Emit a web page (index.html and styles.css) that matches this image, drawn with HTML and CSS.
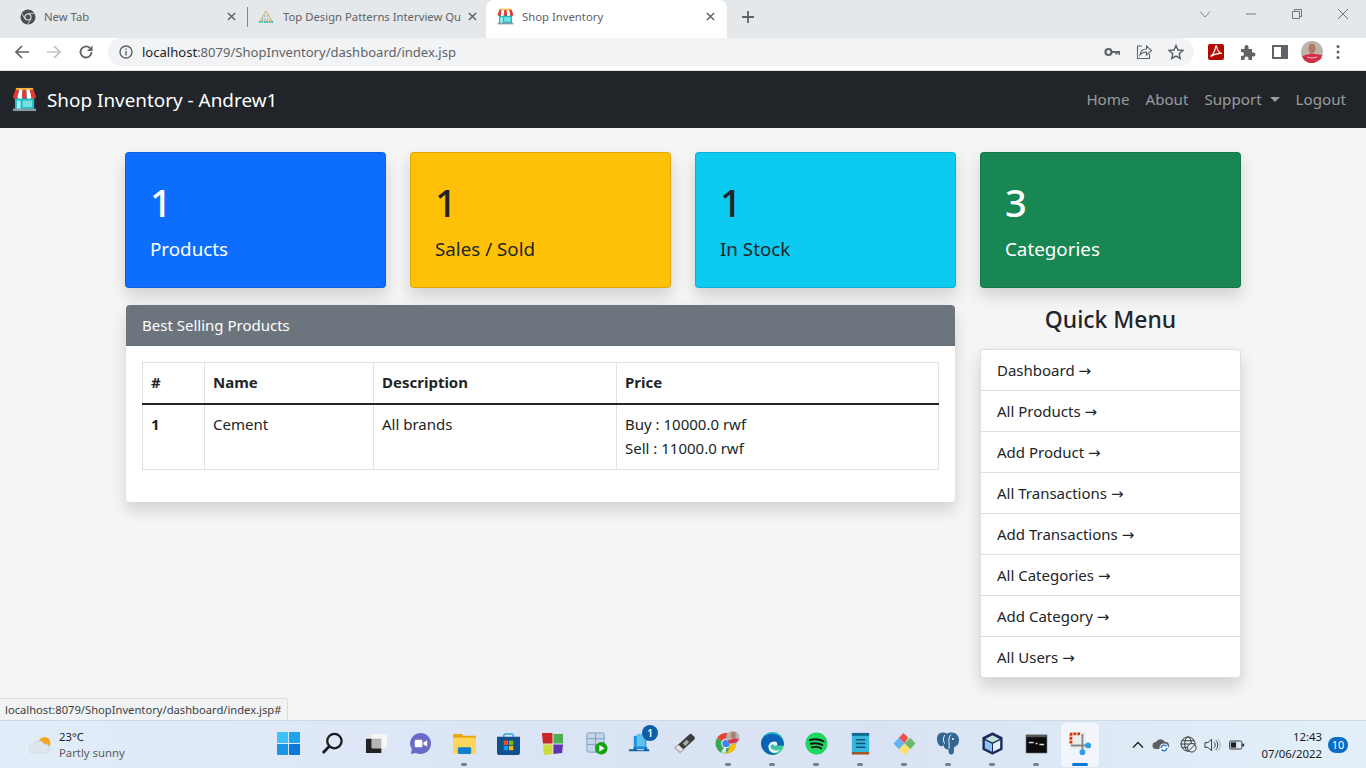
FILE: index.html
```html
<!DOCTYPE html>
<html lang="en">
<head>
<meta charset="utf-8">
<title>Shop Inventory</title>
<link rel="stylesheet" href="styles.css">
</head>
<body>
<svg class="defs" width="0" height="0" aria-hidden="true">
  <defs>
    <symbol id="store" viewBox="0 0 26 26">
      <rect x="3" y="9" width="20" height="14" fill="#17bcc6"/>
      <rect x="11" y="14" width="10" height="7" fill="#74e0e4"/>
      <rect x="5" y="14" width="4" height="9" fill="#a5ecee"/>
      <rect x="1" y="22.500" width="24" height="2.500" fill="#8e99a6"/>
      <path d="M4 2h3.600L5.800 10a2.400 2.400 0 0 1-4.800 0z" fill="#e53935"/>
      <path d="M7.600 2h3.600l-.6 8a2.400 2.400 0 0 1-4.800 0z" fill="#fff"/>
      <path d="M11.200 2h3.600l.6 8a2.400 2.400 0 0 1-4.800 0z" fill="#e53935"/>
      <path d="M14.800 2h3.600l1.800 8a2.400 2.400 0 0 1-4.800 0z" fill="#fff"/>
      <path d="M18.400 2H22l3 8a2.400 2.400 0 0 1-4.800 0z" fill="#e53935"/>
      <rect x="4" y="1" width="18" height="1.800" fill="#fbb933"/>
    </symbol>
    <symbol id="x" viewBox="0 0 10 10"><path d="M1 1l8 8M9 1l-8 8" fill="none" stroke="#5f6368" stroke-width="1.600"/></symbol>
  </defs>
</svg>

<header class="tabstrip">
  <div class="tab">
    <svg class="fav" viewBox="0 0 16 16"><circle cx="8" cy="8" r="7.500" fill="#4a4d51"/><circle cx="8" cy="8" r="3.600" fill="#e4e8eb"/><circle cx="8" cy="8" r="2.500" fill="#4a4d51"/><path d="M8 4.400h6.500M5 10l-3.200-5.600M11 10l-3.500 5.500" stroke="#e4e8eb" stroke-width=".8"/></svg>
    <span class="tab-title">New Tab</span>
    <svg class="tab-x"><use href="#x"/></svg>
  </div>
  <div class="tab tab-sep">
    <svg class="fav" viewBox="0 0 16 16"><path d="M8 2L2 12h12z" fill="none" stroke="#e3a857" stroke-width="1"/><path d="M1 13h14" stroke="#2db5bd" stroke-width="2" stroke-dasharray="1.500 1"/><path d="M4 10h8M6 7h4" stroke="#7fc4d6" stroke-width="1.500" stroke-dasharray="1.500 1"/></svg>
    <span class="tab-title">Top Design Patterns Interview Qu</span>
    <svg class="tab-x"><use href="#x"/></svg>
  </div>
  <div class="tab tab-active">
    <svg class="fav"><use href="#store"/></svg>
    <span class="tab-title">Shop Inventory</span>
    <svg class="tab-x"><use href="#x"/></svg>
  </div>
  <svg class="newtab" viewBox="0 0 12 12"><path d="M6 0v12M0 6h12" stroke="#5f6368" stroke-width="1.800"/></svg>
  <div class="winctl">
    <svg viewBox="0 0 12 12"><path d="M1 3.500l5 5.500 5-5.500" fill="none" stroke="#80868b"/></svg>
    <svg viewBox="0 0 12 12"><path d="M1 6h10" stroke="#777"/></svg>
    <svg viewBox="0 0 12 12"><path d="M1.500 3.500h7v7h-7zM3.500 3.500v-2h7v7h-2" fill="none" stroke="#777"/></svg>
    <svg viewBox="0 0 12 12"><path d="M1 1l10 10M11 1L1 11" stroke="#777"/></svg>
  </div>
</header>

<div class="toolbar">
  <svg class="tool" viewBox="0 0 16 16"><path d="M15 8H2M8 2L2 8l6 6" fill="none" stroke="#5f6368" stroke-width="1.700"/></svg>
  <svg class="tool" viewBox="0 0 16 16"><path d="M1 8h13M8 2l6 6-6 6" fill="none" stroke="#bdc1c6" stroke-width="1.700"/></svg>
  <svg class="tool" viewBox="0 0 16 16"><path d="M13.500 8A5.500 5.500 0 1 1 11.800 4" fill="none" stroke="#5f6368" stroke-width="1.800"/><path d="M14.500 1.500v5.500H9z" fill="#5f6368"/></svg>
  <div class="omnibox">
    <svg class="info" viewBox="0 0 14 14"><circle cx="7" cy="7" r="6" fill="none" stroke="#5f6368" stroke-width="1.400"/><path d="M7 6v4.500M7 3.500v1.300" stroke="#5f6368" stroke-width="1.400"/></svg>
    <span class="url"><span class="url-host">localhost</span>:8079/ShopInventory/dashboard/index.jsp</span>
    <span class="omni-icons">
      <svg viewBox="0 0 16 16"><circle cx="4.500" cy="8" r="3" fill="none" stroke="#5f6368" stroke-width="2.200"/><path d="M7 8h8.500v3M12.500 8v2.500" fill="none" stroke="#5f6368" stroke-width="2"/></svg>
      <svg viewBox="0 0 16 16"><path d="M6 2H1.500v12.500h12V10" fill="none" stroke="#5f6368" stroke-width="1.100"/><path d="M4 11c.5-4 3.500-6 6.500-6V2l5 4.500-5 4.500V8C8 8 5.500 9 4 11z" fill="none" stroke="#5f6368" stroke-width="1.100"/></svg>
      <svg viewBox="0 0 16 16"><path d="M8 1.500l2 4.500 4.800.5-3.600 3.200 1 4.800L8 12.100l-4.200 2.400 1-4.800L1.200 6.500 6 6z" fill="none" stroke="#5f6368" stroke-width="1.500"/></svg>
    </span>
  </div>
  <div class="ext-icons">
    <svg viewBox="0 0 16 16"><rect width="16" height="16" rx="2" fill="#b30b00"/><path d="M2.500 12.500C5 11 7.500 6 7.500 3c0-1.500 1.300-1.500 1.300 0 0 3 2.500 6 5 6.500-3-.5-7 .5-11.300 3z" fill="none" stroke="#fff" stroke-width="1.200"/></svg>
    <svg viewBox="0 0 16 16"><path d="M1 5h3.500V3a2 2 0 0 1 4 0v2H12v3.500h1.500a2 2 0 0 1 0 4H12V16H8.500v-1.500a2 2 0 0 0-4 0V16H1v-4h1a2 2 0 0 0 0-4H1z" fill="#5f6368"/></svg>
    <svg viewBox="0 0 16 16"><rect x="1" y="2" width="14" height="12" fill="none" stroke="#5f6368" stroke-width="2"/><rect x="9" y="2" width="6" height="12" fill="#5f6368"/></svg>
    <svg class="avatar" viewBox="0 0 22 22"><circle cx="11" cy="11" r="11" fill="#bdb4ae"/><ellipse cx="11" cy="7.500" rx="3.600" ry="5" fill="#b27a62"/><path d="M1 15l9-2.500 11 1.500-1 4-7 4h-5l-5-3z" fill="#d42d45"/><path d="M6 16l5 1 5-1" stroke="#f3c6cd" fill="none"/></svg>
    <svg class="dots" viewBox="0 0 4 16"><circle cx="2" cy="2.500" r="1.500" fill="#5f6368"/><circle cx="2" cy="8" r="1.500" fill="#5f6368"/><circle cx="2" cy="13.500" r="1.500" fill="#5f6368"/></svg>
  </div>
</div>

<nav class="navbar">
  <a class="brand" href="#"><svg class="brand-icon"><use href="#store"/></svg>Shop Inventory - Andrew1</a>
  <div class="nav-links">
    <a href="#">Home</a>
    <a href="#">About</a>
    <a href="#" class="caret">Support</a>
    <a href="#">Logout</a>
  </div>
</nav>

<main class="page">
  <div class="container">
    <section class="stats">
      <div class="stat stat-blue"><div class="stat-num">1</div><div class="stat-label">Products</div></div>
      <div class="stat stat-yellow"><div class="stat-num">1</div><div class="stat-label">Sales / Sold</div></div>
      <div class="stat stat-cyan"><div class="stat-num">1</div><div class="stat-label">In Stock</div></div>
      <div class="stat stat-green"><div class="stat-num">3</div><div class="stat-label">Categories</div></div>
    </section>
    <section class="lower">
      <div class="best">
        <div class="best-head">Best Selling Products</div>
        <div class="best-body">
          <table>
            <thead>
              <tr><th class="c1">#</th><th class="c2">Name</th><th class="c3">Description</th><th>Price</th></tr>
            </thead>
            <tbody>
              <tr><th>1</th><td>Cement</td><td>All brands</td><td>Buy : 10000.0 rwf<br>Sell : 11000.0 rwf</td></tr>
            </tbody>
          </table>
        </div>
      </div>
      <aside class="quick">
        <h4>Quick Menu</h4>
        <ul>
          <li>Dashboard <span class="arr">→</span></li>
          <li>All Products <span class="arr">→</span></li>
          <li>Add Product <span class="arr">→</span></li>
          <li>All Transactions <span class="arr">→</span></li>
          <li>Add Transactions <span class="arr">→</span></li>
          <li>All Categories <span class="arr">→</span></li>
          <li>Add Category <span class="arr">→</span></li>
          <li>All Users <span class="arr">→</span></li>
        </ul>
      </aside>
    </section>
  </div>
  <div class="statusbubble">localhost:8079/ShopInventory/dashboard/index.jsp#</div>
</main>

<footer class="taskbar">
  <div class="weather">
    <svg viewBox="0 0 24 20"><circle cx="16" cy="8" r="6" fill="#f5a623"/><path d="M5 18a4 4 0 0 1-.5-8 6 6 0 0 1 11-1 4.500 4.500 0 0 1 2 9z" fill="#dfe6ee" stroke="#bcc8d4" stroke-width=".5"/></svg>
    <div class="weather-text"><div class="temp">23°C</div><div class="cond">Partly sunny</div></div>
  </div>
  <div class="apps">
    <div class="app"><svg viewBox="0 0 24 24"><rect x="0" y="0" width="11.500" height="11.500" rx="1" fill="#3fc1f5"/><rect x="12.500" y="0" width="11.500" height="11.500" rx="1" fill="#20a4ee"/><rect x="0" y="12.500" width="11.500" height="11.500" rx="1" fill="#1a94e4"/><rect x="12.500" y="12.500" width="11.500" height="11.500" rx="1" fill="#0a78d4"/></svg></div>
    <div class="app"><svg viewBox="0 0 24 24"><circle cx="14" cy="9.500" r="7.500" fill="none" stroke="#1c1c1c" stroke-width="2.400"/><path d="M8.500 15L2 22" stroke="#1c1c1c" stroke-width="3"/></svg></div>
    <div class="app"><svg viewBox="0 0 24 24"><rect x="1" y="7" width="16" height="15" rx="1" fill="#222"/><rect x="7" y="2" width="16" height="15" rx="1" fill="#f6f6f6"/><rect x="7" y="7" width="10" height="10" fill="#b5b5b5"/></svg></div>
    <div class="app"><svg viewBox="0 0 24 24"><path d="M12 1a11 11 0 1 1-5 20.800L2 23l1-5A11 11 0 0 1 12 1z" fill="#6a6bc6"/><rect x="6" y="8" width="8" height="8" rx="1.500" fill="#fff"/><path d="M15 11l4-2.500v7L15 13z" fill="#fff"/></svg></div>
    <div class="app on"><svg viewBox="0 0 24 24"><path d="M0 3a1 1 0 0 1 1-1h8l2 2h12a1 1 0 0 1 1 1v17a1 1 0 0 1-1 1H1a1 1 0 0 1-1-1z" fill="#e8a913"/><rect y="6" width="24" height="17" rx="1" fill="#fdd75b"/><rect x="5" y="16" width="14" height="7" rx="1.500" fill="#0f7fd0"/></svg></div>
    <div class="app"><svg viewBox="0 0 24 24"><path d="M7 6V4a2 2 0 0 1 2-2h6a2 2 0 0 1 2 2v2" fill="none" stroke="#29a8e0" stroke-width="1.500"/><path d="M0 5h24v16a3 3 0 0 1-3 3H3a3 3 0 0 1-3-3z" fill="#11508a"/><rect x="7" y="9" width="4.500" height="4.500" fill="#f25022"/><rect x="12.500" y="9" width="4.500" height="4.500" fill="#7fba00"/><rect x="7" y="14.500" width="4.500" height="4.500" fill="#00a4ef"/><rect x="12.500" y="14.500" width="4.500" height="4.500" fill="#ffb900"/></svg></div>
    <div class="app"><svg viewBox="0 0 24 24"><path d="M1 1h11v11H2z" fill="#c62828"/><path d="M13 2h10v10H13z" fill="#4caf50"/><path d="M2 13h10v10l-9 1z" fill="#cddc39"/><path d="M13 13h10l-1 9-9 1z" fill="#5e35b1"/></svg></div>
    <div class="app"><svg viewBox="0 0 24 24"><rect x="2" y="1" width="18" height="20" rx="2" fill="#c6d6ea" stroke="#7f9cc0"/><path d="M2 7h18M2 13h18M11 1v20" stroke="#7f9cc0"/><circle cx="17" cy="17" r="6.500" fill="#13a10e"/><path d="M15 13.500v7l5.500-3.500z" fill="#fff"/></svg></div>
    <div class="app"><svg viewBox="0 0 24 24"><path d="M5 4h13v14H5z" fill="#1f8fd8"/><path d="M8 2h9v13H8z" fill="#5cc2ee"/><path d="M0 18h5v-3l4 4h6l4-4v3h2v2H0z" fill="#0e5fa8"/></svg><span class="count">1</span></div>
    <div class="app"><svg viewBox="0 0 24 24"><path d="M17 2.500a2 2 0 0 1 2.800 0l2.500 2.500a2 2 0 0 1 0 2.800L11 18l-5.500-5z" fill="#3d3d3d"/><path d="M14 8l3 2.500-4 4-3-2.500z" fill="#a5a5a5"/><path d="M5.500 13L11 18l-3.500 3.500L2 16.500z" fill="#e4e4e4" stroke="#555" stroke-width=".7"/></svg></div>
    <div class="app on"><svg class="wide" viewBox="0 0 26 26"><path d="M11 13L1.500 7.500A11 11 0 0 1 20.500 7.500H11z" fill="#ea4335"/><path d="M11 13l-5.500 9.500A11 11 0 0 1 1.500 7.500z" fill="#34a853"/><path d="M11 13h9.500A11 11 0 0 1 5.500 22.500H11z" fill="#34a853"/><path d="M11 8h9.500A11 11 0 0 1 11 24l5-9z" fill="#fbbc05"/><circle cx="11" cy="13" r="5" fill="#fff"/><circle cx="11" cy="13" r="4" fill="#4285f4"/><circle cx="18" cy="7" r="7" fill="#b9b1ad"/><ellipse cx="18.500" cy="4.500" rx="2.500" ry="3.500" fill="#a87d6a"/><path d="M12.500 10l8-2.500 4 1-3 3.500-7 1z" fill="#d8344c"/></svg></div>
    <div class="app on"><svg viewBox="0 0 24 24"><defs><linearGradient id="edge" x1="0" y1="0" x2="1" y2="1"><stop offset="0" stop-color="#1aa5d9"/><stop offset="1" stop-color="#52d47f"/></linearGradient></defs><circle cx="12" cy="12" r="12" fill="url(#edge)"/><path d="M0 12a12 12 0 0 0 18 10c-4 1-9 0-10-5-.5-3 2-6 6-6 2 0 3 1 3 3h7C24 6 18 2 12 2 5 2 0 6 0 12z" fill="#0a63b4"/><path d="M8 17c-1-4 2-7 6-7 2 0 3 1 3 3 0 1-1 1.500-3 1.500-.5-2-4-2-4 1 0 3 5 5 10 3a12 12 0 0 1-6 3.500C10 21.500 8.500 19.500 8 17z" fill="#e8f6fb"/></svg></div>
    <div class="app on"><svg viewBox="0 0 24 24"><circle cx="12" cy="12" r="11.500" fill="#1ed760"/><path d="M5 8.500c5-1.500 10-1 14.500 1.300M6 12.300c4-1 8.500-.7 12 1.200M7 16c3.500-.8 7-.5 10 1" fill="none" stroke="#111" stroke-width="2" stroke-linecap="round"/></svg></div>
    <div class="app on"><svg viewBox="0 0 24 24"><rect x="3" y="1" width="18" height="21" fill="#35b8e0"/><rect x="3" y="1" width="18" height="3" fill="#156a8f"/><path d="M7 8h10M7 12h10M7 16h10" stroke="#0c5372" stroke-width="1.600"/><rect x="3" y="21" width="18" height="2.500" fill="#a5521d"/></svg></div>
    <div class="app on"><svg viewBox="0 0 24 24"><path d="M12 12L6 6l5-5 5 5z" fill="#ef5350"/><path d="M12 12l6-6 5.500 6L18 18z" fill="#66bb6a"/><path d="M12 12l6 6-6 6-6-6z" fill="#ffe066"/><path d="M12 12l-6 6-5.500-6L6 6z" fill="#64b5f6"/></svg></div>
    <div class="app on"><svg class="wide" viewBox="0 0 26 24"><path d="M5 1.500c2.500-1 5-.5 7 .8 2-1.300 5-1.800 8-.5 4 2 5 7 3 11-1 1.800-2.500 2-3.500 2.700-1 .8-.5 2.500-.5 4 0 2.500-1.500 4-3.500 3.500-1.800-.5-2-2.500-2-5-3 0-4.500-1.500-5-4.500-1 1.500-3 1.500-4 .5C1.500 11 .5 4 5 1.500z" fill="#336791"/><path d="M10 3.500C8 6 8 9 9.500 12M16 3c-2 2-2.500 5-2 8 .3 2 .3 4 0 6" fill="none" stroke="#fff" stroke-width=".9"/><circle cx="18" cy="7.500" r="1" fill="#fff"/></svg></div>
    <div class="app on"><svg viewBox="0 0 24 24"><path d="M12 1.500l9.500 4.500v12L12 22.500 2.500 18V6z" fill="#1b2a5c" stroke="#1b2a5c" stroke-width="2" stroke-linejoin="round"/><path d="M12 3.500l7.500 3.700-7.500 3.800-7.500-3.800z" fill="#c4e3dd"/><path d="M4 8.500l7.500 3.800v8.200L4 17z" fill="#8ec3ee"/><path d="M20 8.500l-7.500 3.800v8.200L20 17z" fill="#e6f2fb"/></svg></div>
    <div class="app on"><svg viewBox="0 0 24 24"><rect x="1" y="3" width="22" height="19" fill="#0c0c0c" stroke="#9a9a9a" stroke-width=".6"/><rect x="1" y="3" width="22" height="2.500" fill="#555"/><path d="M4 11h5M11 12h2M15 13h5" stroke="#ddd" stroke-width="1.500"/></svg></div>
    <div class="app app-active"><svg viewBox="0 0 24 24"><rect x="0" y="0" width="18" height="18" fill="#ededed"/><path d="M2 12V3a1 1 0 0 1 1-1h9" fill="none" stroke="#d83b01" stroke-width="3" stroke-dasharray="3 1"/><path d="M14 2v17M2 14h20" stroke="#7f8a92" stroke-width="2"/><circle cx="20" cy="14" r="3" fill="#2aa0e8"/><circle cx="14" cy="21" r="3" fill="#2aa0e8"/></svg></div>
  </div>
  <div class="tray">
    <svg class="t-chev" viewBox="0 0 12 12"><path d="M1 8.500l5-5 5 5" fill="none" stroke="#1c1c1c" stroke-width="1.300"/></svg>
    <svg class="t-cloud" viewBox="0 0 18 16"><path d="M4 12a3.500 3.500 0 0 1 0-7 5 5 0 0 1 9 0 3.500 3.500 0 0 1 1 7z" fill="#5a5f66"/><circle cx="12" cy="11" r="4.500" fill="#fff"/><path d="M9 11a3 3 0 0 1 5.500-1.500M15 11a3 3 0 0 1-5.500 1.500" fill="none" stroke="#1a73d8" stroke-width="1.400"/></svg>
    <svg class="t-globe" viewBox="0 0 18 18"><circle cx="8.500" cy="8.500" r="7.500" fill="none" stroke="#333"/><ellipse cx="8.500" cy="8.500" rx="3.500" ry="7.500" fill="none" stroke="#333"/><path d="M1 8.500h15M2 5h13M2 12h8" stroke="#333"/><circle cx="12.500" cy="12.500" r="4.500" fill="#e3edf8" stroke="#333"/><path d="M9.500 15.500l6-6" stroke="#333"/></svg>
    <svg class="t-vol" viewBox="0 0 18 16"><path d="M1 5.500h3l4-3.500v12l-4-3.500H1z" fill="none" stroke="#333"/><path d="M10.500 5a4 4 0 0 1 0 6M12.500 3a7 7 0 0 1 0 10" fill="none" stroke="#333"/><path d="M14.500 1.500a9 9 0 0 1 0 13" fill="none" stroke="#aab"/></svg>
    <svg class="t-bat" viewBox="0 0 18 12"><rect x=".5" y="1.500" width="14" height="9" rx="1.500" fill="none" stroke="#222"/><rect x="2" y="3" width="6" height="6" fill="#222"/><rect x="15" y="4.500" width="2" height="3" fill="#222"/></svg>
    <div class="clock"><div>12:43</div><div>07/06/2022</div></div>
    <span class="notif">10</span>
  </div>
</footer>
</body>
</html>
```

FILE: styles.css
```css
* { box-sizing: border-box; }
html, body { margin: 0; height: 100%; }
body {
  width: 1366px;
  height: 768px;
  overflow: hidden;
  display: flex;
  flex-direction: column;
  background: #f5f5f5;
  font-family: "Noto Sans", "Liberation Sans", sans-serif;
  color: #212529;
  font-size: 15px;
}
.defs { position: absolute; }

/* Browser chrome */
.tabstrip {
  height: 38px;
  background: #e4e8eb;
  display: flex;
  align-items: stretch;
  flex: none;
}
.tab {
  width: 247px;
  padding: 0 11px 0 20px;
  display: flex;
  align-items: center;
  position: relative;
  height: 33px;
  font-size: 11.300px;
  color: #5f6368;
}
.tab-sep { padding: 0 9px 0 11px; width: 239px; }
.tab-sep .fav { margin-right: 9px; }
.tab-sep::before {
  content: "";
  position: absolute;
  left: 0;
  top: 7px;
  width: 1px;
  height: 20px;
  background: #80868b;
}
.tab-active {
  background: #fff;
  height: 38px;
  padding: 0 12px 5px 11px;
  width: 241px;
  border-radius: 8px 8px 0 0;
}
.fav { width: 16px; height: 16px; flex: none; margin-right: 8px; }
.tab-active .fav { width: 17px; height: 17px; margin-right: 8px; }
.tab-title { flex: 1; white-space: nowrap; overflow: hidden; }
.tab-x { width: 9px; height: 9px; flex: none; margin-left: 4px; }
.newtab { width: 12px; height: 12px; margin: 11px 0 0 15px; }
.winctl {
  margin-left: auto;
  display: flex;
  gap: 34px;
  padding: 8px 17px 0 0;
}
.winctl svg { width: 12px; height: 12px; }

.toolbar {
  height: 33px;
  background: #fff;
  flex: none;
  display: flex;
  align-items: flex-start;
  padding-left: 14px;
  border-bottom: 1px solid #dfe1e5;
}
.tool { width: 16px; height: 16px; margin: 6px 16px 0 0; flex: none; }
.omnibox {
  margin: 0 0 0 -2px;
  width: 1086px;
  height: 28px;
  border-radius: 14px;
  background: #f1f3f4;
  display: flex;
  align-items: center;
  padding-left: 11px;
  font-size: 13.050px;
  color: #5f6368;
}
.info { width: 14px; height: 14px; margin-right: 9px; }
.url-host { color: #202124; }
.omni-icons { margin-left: auto; display: flex; gap: 16px; padding-right: 10px; }
.omni-icons svg { width: 16px; height: 16px; }
.ext-icons { display: flex; align-items: center; height: 28px; padding-left: 14px; }
.ext-icons svg { width: 16px; height: 16px; margin-right: 16px; }
.ext-icons .avatar { width: 22px; height: 22px; margin: 0 13px 0 -3px; }
.ext-icons .dots { width: 4px; height: 16px; margin: 0; }

/* Navbar */
.navbar {
  height: 57px;
  flex: none;
  background: #212529;
  display: flex;
  align-items: center;
  justify-content: space-between;
  padding: 0 12px;
}
.brand {
  display: flex;
  align-items: center;
  color: #fff;
  font-size: 18.900px;
  text-decoration: none;
}
.brand-icon { width: 25px; height: 25px; margin-right: 10px; }
.nav-links { display: flex; }
.nav-links a {
  color: rgba(255, 255, 255, .55);
  text-decoration: none;
  padding: 7px 8px 9px;
  font-size: 15.150px;
}
.caret::after {
  content: "";
  display: inline-block;
  margin-left: 8px;
  vertical-align: 3px;
  border-top: 5px solid;
  border-left: 5px solid transparent;
  border-right: 5px solid transparent;
}

/* Page */
.page { flex: 1; position: relative; min-height: 0; }
.container { width: 1116px; margin: 0 auto; padding-top: 24px; }
.stats { display: grid; grid-template-columns: repeat(4, 261px); gap: 24px; }
.stat {
  height: 136px;
  border-radius: 4px;
  padding: 24px;
  box-shadow: 0 8px 16px rgba(0, 0, 0, .15);
  border: 1px solid rgba(0, 0, 0, .125);
}
.stat-num { font-size: 38px; line-height: 50px; font-weight: 500; }
.stat-label { font-size: 18.800px; line-height: 44px; }
.stat-blue { background: #0d6efd; color: #fff; }
.stat-yellow { background: #ffc107; }
.stat-cyan { background: #0dcaf0; }
.stat-green { background: #198754; color: #fff; }

.lower { display: flex; justify-content: space-between; align-items: flex-start; margin-top: 17px; padding-left: 1px; }
.best {
  width: 829px;
  height: 197px;
  background: #fff;
  border-radius: 4px;
  box-shadow: 0 8px 16px rgba(0, 0, 0, .15);
  overflow: hidden;
}
.best-head {
  height: 41px;
  background: #6c757d;
  color: #fff;
  padding: 0 16px;
  line-height: 41px;
  border-bottom: 1px solid #646c74;
}
.best-body { padding: 16px; }
table { width: 797px; border-collapse: collapse; table-layout: fixed; }
th, td { border: 1px solid #dee2e6; padding: 7px 8px; text-align: left; vertical-align: top; line-height: 24px; }
thead th { border-bottom: 2px solid #212529; height: 41px; }
tbody th, tbody td { height: 66px; }
td { font-weight: 400; }
th { font-weight: 700; }
.c1 { width: 62px; }
.c2 { width: 169px; }
.c3 { width: 243px; }

.quick { width: 261px; }
.quick h4 {
  margin: 0 0 15px;
  text-align: center;
  font-size: 22.900px;
  font-weight: 500;
  line-height: 29px;
}
.quick ul {
  list-style: none;
  margin: 0;
  padding: 0;
  background: #fff;
  border: 1px solid rgba(0, 0, 0, .125);
  border-radius: 4px;
  box-shadow: 0 8px 16px rgba(0, 0, 0, .15);
}
.quick li {
  height: 41px;
  padding: 0 16px;
  line-height: 40px;
  border-bottom: 1px solid rgba(0, 0, 0, .125);
}
.quick li:last-child { border-bottom: 0; height: 40px; }
.arr { font-family: "DejaVu Sans", sans-serif; font-size: 15px; line-height: 1; }

.statusbubble {
  position: absolute;
  left: 0;
  bottom: 0;
  height: 22px;
  padding: 0 6px 0 5px;
  background: #f1f3f4;
  border: 1px solid #dadce0;
  border-left: 0;
  border-bottom: 0;
  border-radius: 0 3px 0 0;
  font-size: 11.200px;
  line-height: 22px;
  color: #3c4043;
}

/* Taskbar */
.taskbar {
  height: 48px;
  flex: none;
  background: linear-gradient(90deg, #e2edf9 0%, #dbe4f5 40%, #d9e3f3 65%, #e3f0f9 100%);
  border-top: 1px solid #d0d8e4;
  display: flex;
  align-items: center;
  position: relative;
}
.weather { width: 266px; display: flex; align-items: center; padding-left: 28px; color: #1c1c1c; font-size: 11.300px; line-height: 16px; }
.weather svg { width: 25px; height: 20px; margin-right: 6px; }
.cond { color: #5c5c5c; }
.apps { display: flex; }
.app { width: 44px; height: 44px; display: flex; align-items: center; justify-content: center; position: relative; }
.app svg { width: 23px; height: 23px; margin-bottom: 2px; flex: none; }
.app svg.wide { width: 26px; height: 25px; }
.app.on::after {
  content: "";
  position: absolute;
  bottom: 1px;
  left: 19px;
  width: 6px;
  height: 3px;
  border-radius: 2px;
  background: #7a7f87;
}
.app-active { background: #f2f6fc; border-radius: 4px; width: 38px; margin: 0 3px; }
.app-active::after {
  content: "";
  position: absolute;
  bottom: 1px;
  left: 11px;
  width: 16px;
  height: 3px;
  border-radius: 2px;
  background: #0a78d4;
}
.count {
  position: absolute;
  top: 2px;
  left: 24px;
  width: 16px;
  height: 16px;
  border-radius: 50%;
  background: #0e5fa8;
  color: #fff;
  font-size: 10px;
  line-height: 16px;
  text-align: center;
  font-weight: 600;
}
.tray { margin-left: auto; display: flex; align-items: center; padding-right: 18px; color: #1c1c1c; }
.tray svg { flex: none; }
.t-chev { width: 12px; height: 12px; margin-right: 8px; }
.t-cloud { width: 18px; height: 16px; margin-right: 10px; }
.t-globe { width: 17px; height: 17px; margin-right: 7px; }
.t-vol { width: 17px; height: 16px; margin-right: 8px; }
.t-bat { width: 16px; height: 12px; }
.clock { font-size: 11.400px; line-height: 17px; text-align: right; width: 77px; }
.notif {
  margin-left: 6px;
  width: 20px;
  height: 16px;
  border-radius: 8px;
  background: #0a6cc4;
  color: #fff;
  font-size: 11px;
  line-height: 16px;
  text-align: center;
}
```
